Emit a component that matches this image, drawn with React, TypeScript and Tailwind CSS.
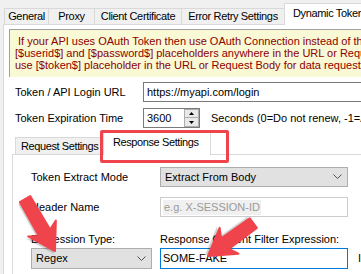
import React from "react";

function Chevron() {
  return (
    <svg width="9" height="6" viewBox="0 0 9 6" className="shrink-0">
      <polyline points="0.5,0.5 4.5,4.5 8.5,0.5" fill="none" stroke="#505050" strokeWidth="1" />
    </svg>
  );
}

function Arrow({ x, y, angle, len }: { x: number; y: number; angle: number; len: number }) {
  const L = len;
  const pts = `0,0 -26,-16 -21,-6.5 ${-L},-6 ${-L},6 -21,6.5 -26,16`;
  return (
    <g transform={`translate(${x},${y}) rotate(${angle})`}>
      <polygon points={pts} fill="#000" opacity="0.18" transform="translate(1.5,2.5)" strokeLinejoin="round" stroke="#000" strokeWidth="3" strokeOpacity="0.1" />
      <polygon points={pts} fill="#f0444c" stroke="#f0444c" strokeWidth="2" strokeLinejoin="round" />
    </g>
  );
}

export default function App() {
  return (
    <div className="w-[361px] h-[274px] overflow-hidden bg-[#f0f0f0] relative font-['Liberation_Sans',Arial,sans-serif] text-[11px] text-black leading-none">
      {/* Tab strip */}
      <div className="flex items-end h-[24px] pl-[4px] whitespace-nowrap tracking-[-0.35px]">
        <div className="w-[44px] shrink-0 h-[16px] border-l border-t border-[#d9d9d9] flex items-center justify-center">General</div>
        <div className="w-[46px] shrink-0 h-[16px] border-l border-t border-[#d9d9d9] flex items-center justify-center">Proxy</div>
        <div className="w-[87px] shrink-0 h-[16px] border-l border-t border-[#d9d9d9] flex items-center justify-center">Client Certificate</div>
        <div className="w-[103px] shrink-0 h-[16px] border-l border-t border-[#d9d9d9] flex items-center justify-center">Error Retry Settings</div>
        <div className="w-[90px] shrink-0 h-[22px] -mb-px border-l border-t border-r border-[#d9d9d9] bg-white flex items-center pl-[8px] pb-[2px] relative z-10">Dynamic Token</div>
      </div>

      {/* Main panel */}
      <div className="ml-[3px] h-[250px] border-l border-t border-[#d9d9d9] bg-white pl-[5px] pt-[4px]">
        <div className="h-[48px] border-l border-t border-[#a0a0a0] bg-[#f9f9d5] pl-[5px] pt-[5px] text-[#8b0000] leading-[12px] whitespace-pre overflow-hidden">
          <div> If your API uses OAuth Token then use OAuth Connection instead of this</div>
          <div>[$userid$] and [$password$] placeholders anywhere in the URL or Request</div>
          <div>use [$token$] placeholder in the URL or Request Body for data requests</div>
        </div>

        {/* Row 1 */}
        <div className="mt-[5px] pl-[6px] h-[20px] flex items-center whitespace-nowrap">
          <div className="w-[128px] shrink-0">Token / API Login URL</div>
          <div className="w-[230px] shrink-0 h-[20px] border border-[#7a7a7a] flex items-center pl-[3px]">https://myapi.com/login</div>
        </div>

        {/* Row 2 */}
        <div className="mt-[6px] pl-[6px] h-[20px] flex items-center whitespace-nowrap">
          <div className="w-[128px] shrink-0">Token Expiration Time</div>
          <div className="w-[57px] shrink-0 h-[20px] border border-[#7a7a7a] flex items-center justify-between pl-[3px]">
            <span>3600</span>
            <div className="w-[15px] h-[18px] flex flex-col">
              <div className="h-[9px] border border-[#adadad] bg-[#e9e9e9] flex items-center justify-center">
                <svg width="5" height="3" viewBox="0 0 5 3"><polygon points="2.5,0 5,3 0,3" fill="#000" /></svg>
              </div>
              <div className="h-[9px] border border-t-0 border-[#adadad] bg-[#e9e9e9] flex items-center justify-center">
                <svg width="5" height="3" viewBox="0 0 5 3"><polygon points="0,0 5,0 2.5,3" fill="#000" /></svg>
              </div>
            </div>
          </div>
          <div className="ml-[11px]">Seconds (0=Do not renew, -1=Auto detect)</div>
        </div>

        {/* Sub tabs */}
        <div className="ml-[3px]">
          <div className="h-[26px] flex items-end pl-[3px] whitespace-nowrap tracking-[-0.4px]">
            <div className="w-[88px] shrink-0 h-[17px] border-l border-t border-[#d9d9d9] bg-[#f0f0f0] flex items-center pl-[5px]">Request Settings</div>
            <div className="w-[108px] shrink-0 h-[23px] -mb-px border-l border-t border-r border-[#d9d9d9] bg-white flex items-center pl-[9px] pb-[3px] relative z-10">Response Settings</div>
          </div>
          <div className="h-[130px] border-l border-t border-[#d9d9d9] bg-white pl-[18px] pt-[12px] whitespace-nowrap">
            <div className="h-[20px] flex items-center">
              <div className="w-[129px] shrink-0">Token Extract Mode</div>
              <div className="w-[188px] shrink-0 h-[20px] border border-[#adadad] bg-[#e1e1e1] flex items-center justify-between pl-[4px] pr-[5px]">
                <span>Extract From Body</span>
                <Chevron />
              </div>
            </div>
            <div className="mt-[10px] h-[20px] flex items-center">
              <div className="w-[129px] shrink-0">Header Name</div>
              <div className="w-[188px] shrink-0 h-[20px] border border-[#cccccc] bg-white flex items-center pl-[2px]">
                <span className="bg-[#f0f0f0] text-[#9a9a9a] px-[1px] py-[2px]">e.g. X-SESSION-ID</span>
              </div>
            </div>
            <div className="mt-[16px] h-[13px] flex items-center">
              <div className="w-[129px] shrink-0">Expression Type:</div>
              <div>Response Content Filter Expression:</div>
            </div>
            <div className="mt-[2px] h-[21px] flex items-center">
              <div className="w-[121px] shrink-0 h-[21px] border border-[#adadad] bg-[#e1e1e1] flex items-center justify-between pl-[4px] pr-[5px]">
                <span>Regex</span>
                <Chevron />
              </div>
              <div className="ml-[8px] w-[188px] shrink-0 h-[21px] border border-[#0078d7] bg-white flex items-center pl-[2px]">SOME-FAKE</div>
              <div className="ml-[10px]">I</div>
            </div>
          </div>
        </div>
      </div>

      {/* Red highlight rectangle */}
      <div className="absolute left-[100px] top-[130px] w-[129px] h-[33px] border-[3px] border-[#f0444c] rounded-[2px] z-20" />

      {/* Arrows */}
      <svg className="absolute left-0 top-0 z-30 pointer-events-none" width="361" height="274" viewBox="0 0 361 274">
        <Arrow x={55} y={251} angle={60} len={60} />
        <Arrow x={208} y={256} angle={144} len={56} />
      </svg>
    </div>
  );
}
